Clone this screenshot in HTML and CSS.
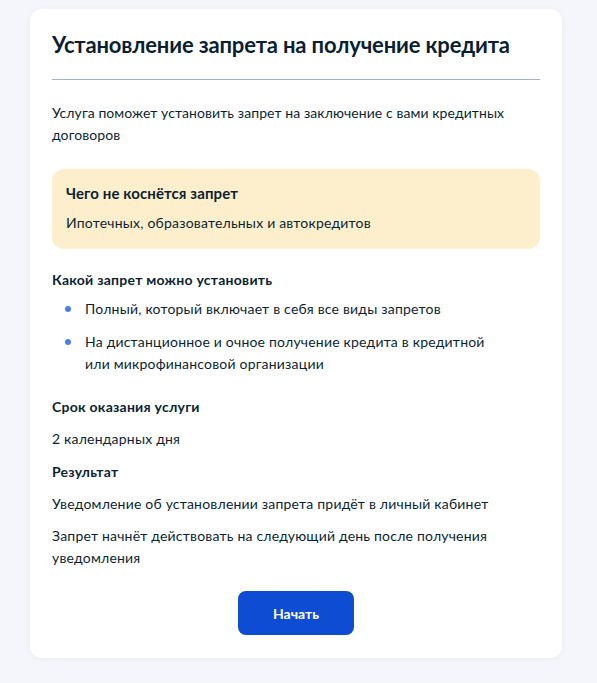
FILE: index.html
```html
<!DOCTYPE html>
<html lang="ru">
<head>
<meta charset="utf-8">
<link rel="stylesheet" href="styles.css">
</head>
<body>
<div class="card">
  <h1 class="title">Установление запрета на получение кредита</h1>
  <hr class="divider">
  <p class="lead">Услуга поможет установить запрет на заключение с вами кредитных договоров</p>
  <div class="note">
    <div class="note-title">Чего не коснётся запрет</div>
    <div class="note-text">Ипотечных, образовательных и автокредитов</div>
  </div>
  <div class="h">Какой запрет можно установить</div>
  <ul class="list">
    <li>Полный, который включает в себя все виды запретов</li>
    <li>На дистанционное и очное получение кредита в кредитной<br>или микрофинансовой организации</li>
  </ul>
  <div class="h h-gap">Срок оказания услуги</div>
  <p class="t">2 календарных дня</p>
  <div class="h h-small">Результат</div>
  <p class="t">Уведомление об установлении запрета придёт в личный кабинет</p>
  <p class="t">Запрет начнёт действовать на следующий день после получения уведомления</p>
  <div class="actions"><button class="btn">Начать</button></div>
</div>
</body>
</html>
```
FILE: styles.css
```css
html, body { margin: 0; padding: 0; }
body {
  background: #f4f6fb;
  font-family: Lato, "Noto Sans", sans-serif;
  color: #0b1f33;
  width: 597px;
  height: 683px;
}
.card {
  margin: 9px 0 0 30px;
  width: 532px;
  box-sizing: border-box;
  background: #fff;
  border-radius: 12px;
  padding: 22px 22px 23px;
  box-shadow: 0 1px 6px rgba(38, 64, 128, 0.06);
}
.title {
  margin: 0;
  font-size: 22px;
  line-height: 28px;
  font-weight: 700;
  letter-spacing: -0.15px;
  white-space: nowrap;
}
.divider {
  margin: 20px 0 0;
  border: 0;
  height: 1px;
  background: #9fb3cb;
}
.lead {
  margin: 22px 0 0;
  font-size: 14px;
  line-height: 22px;
  letter-spacing: 0.08px;
  width: 470px;
}
.note {
  margin-top: 23px;
  background: #feefcc;
  border-radius: 12px;
  padding: 13px 14px 15px;
}
.note-title {
  font-size: 15px;
  line-height: 22px;
  font-weight: 700;
  letter-spacing: 0.1px;
}
.note-text {
  margin-top: 8px;
  font-size: 14px;
  line-height: 22px;
  letter-spacing: 0.2px;
}
.h {
  margin-top: 20px;
  font-size: 14px;
  line-height: 22px;
  font-weight: 700;
  letter-spacing: 0.25px;
}
.h-gap { margin-top: 21px; }
.h-small { margin-top: 11px; }
.list {
  list-style: none;
  margin: 7px 0 0;
  padding: 0 0 0 33px;
}
.list li {
  position: relative;
  font-size: 14px;
  line-height: 22px;
  letter-spacing: 0.2px;
}
.list li + li { margin-top: 11px; }
.list li::before {
  content: "";
  position: absolute;
  left: -20px;
  top: 8px;
  width: 6px;
  height: 6px;
  border-radius: 50%;
  background: #4a7ee6;
}
.t {
  margin: 10px 0 0;
  font-size: 14px;
  line-height: 22px;
  letter-spacing: 0.2px;
}
.actions {
  display: flex;
  justify-content: center;
  margin-top: 22px;
}
.btn {
  width: 116px;
  height: 44px;
  border: 0;
  border-radius: 8px;
  background: #0d4cd3;
  color: #fff;
  font-family: Lato, "Noto Sans", sans-serif;
  font-size: 14px;
  font-weight: 700;
}
```
